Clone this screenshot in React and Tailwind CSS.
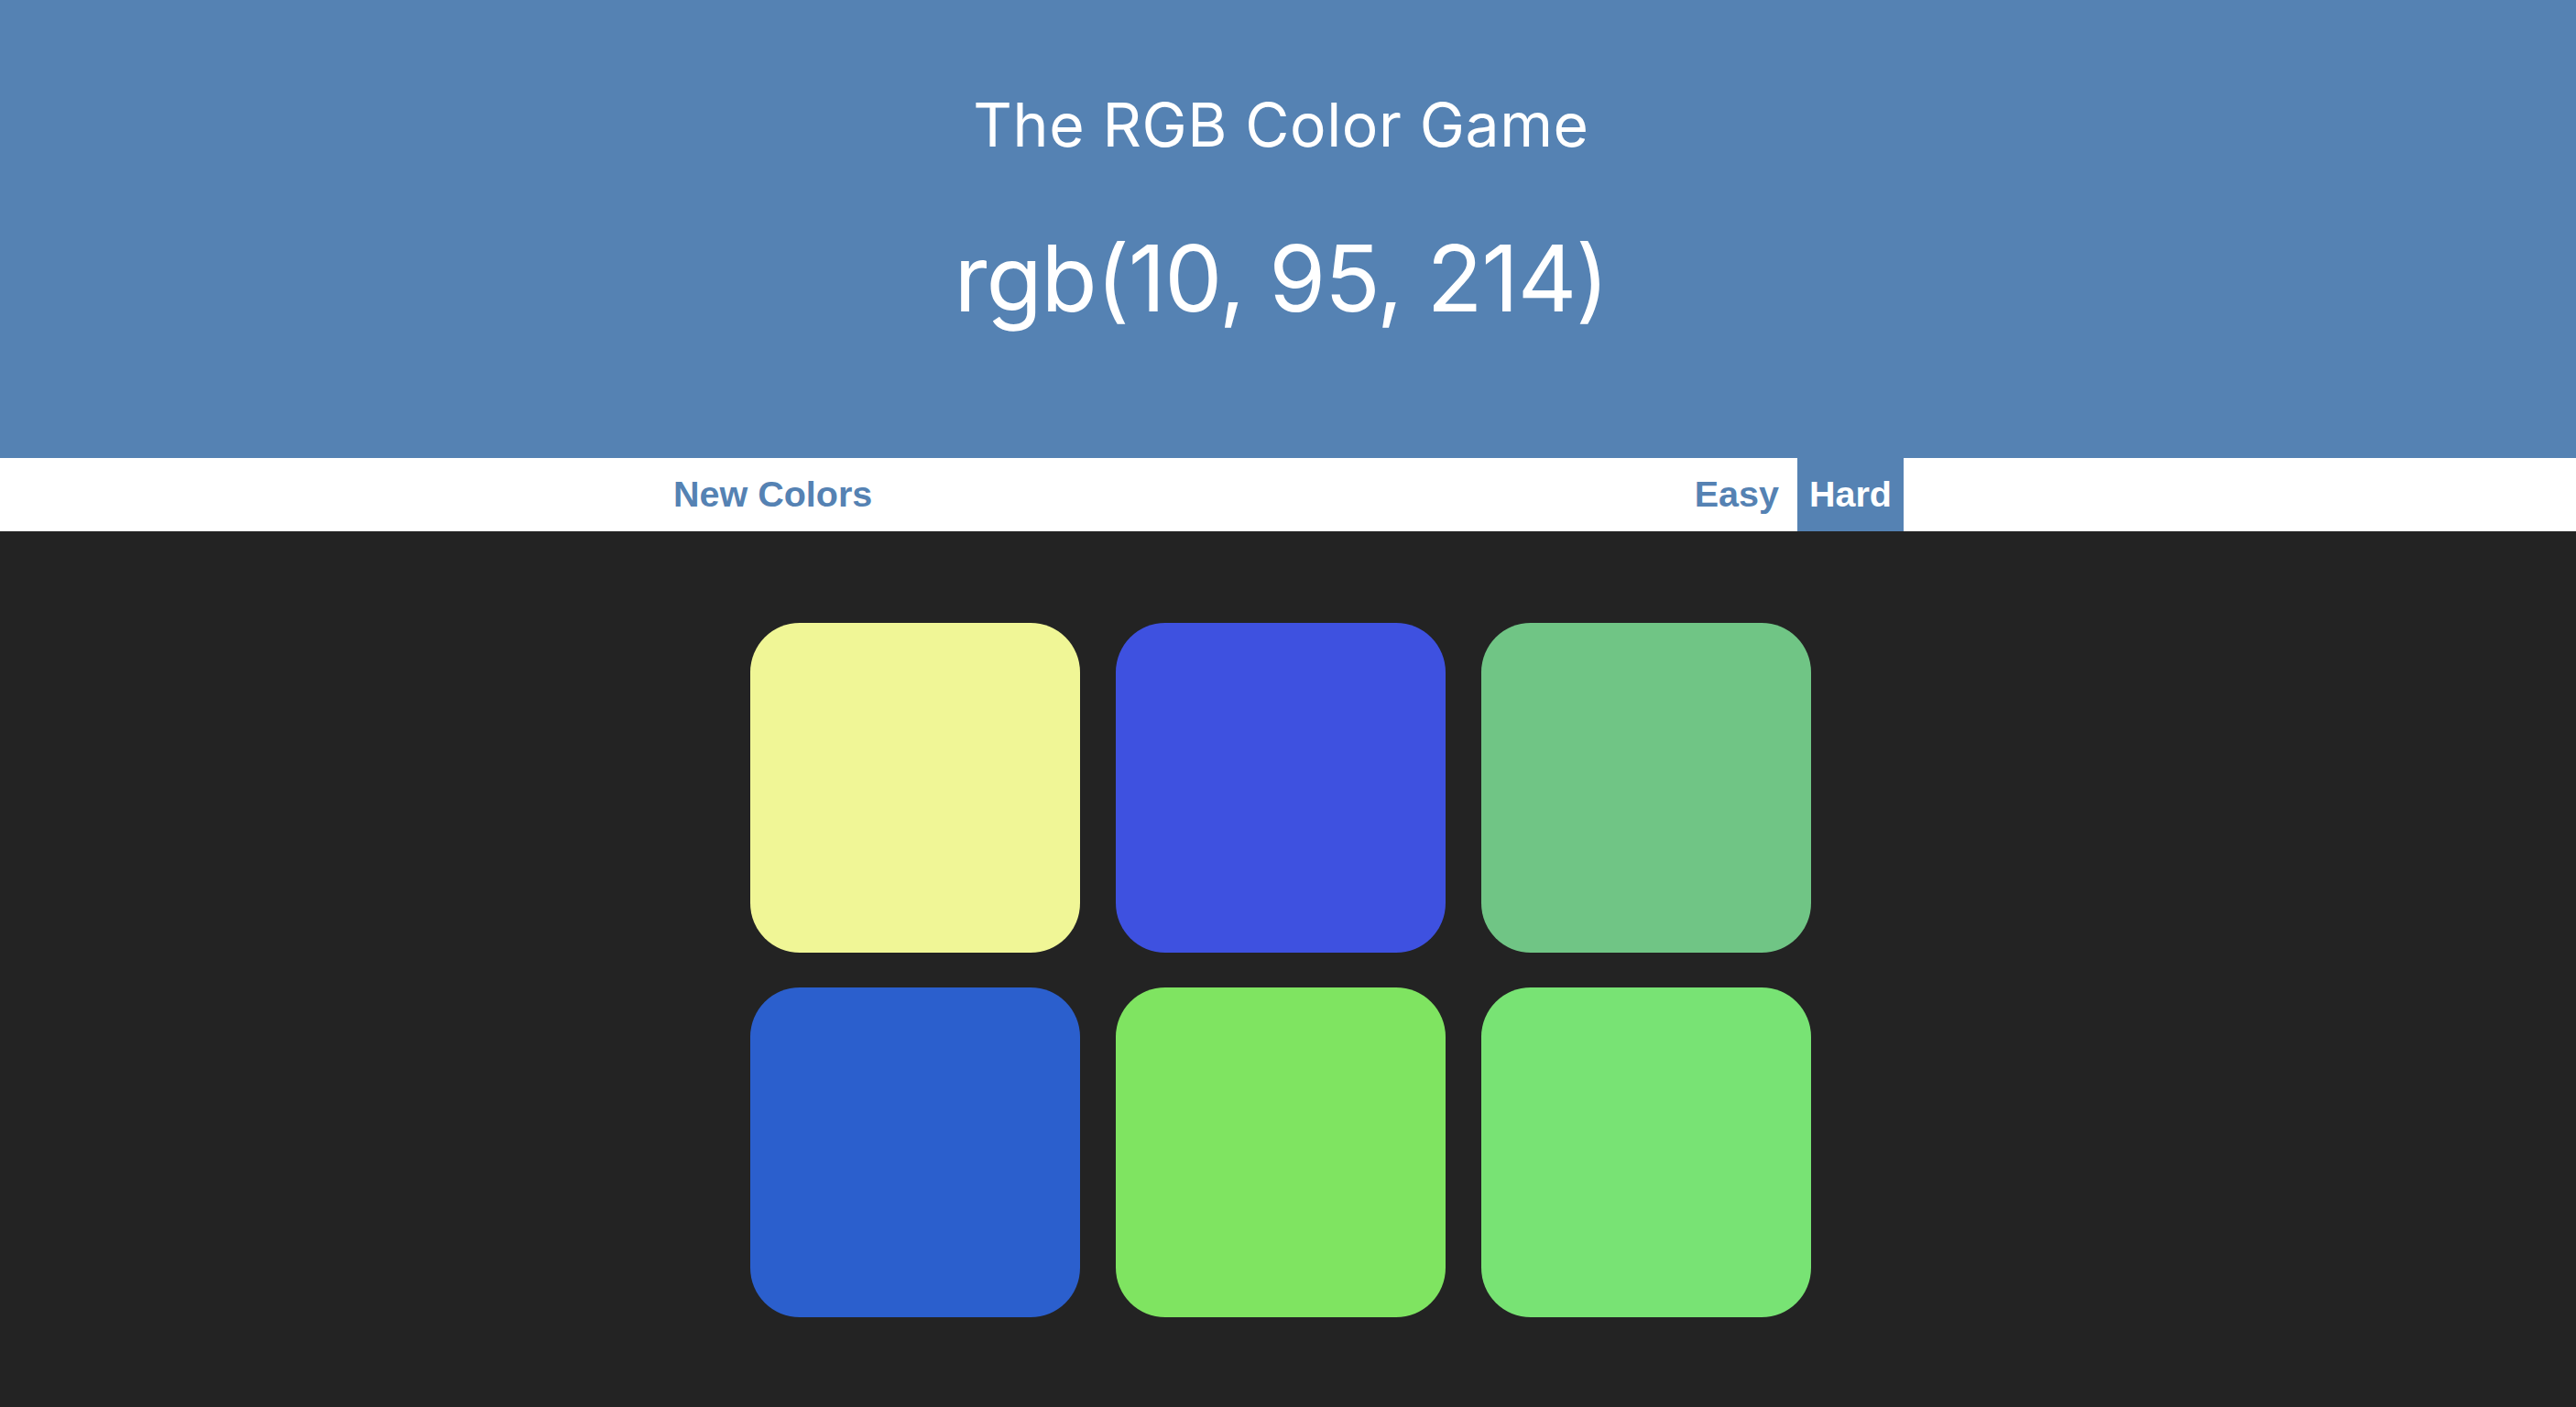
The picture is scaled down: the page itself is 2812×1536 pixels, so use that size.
import React, { useState } from "react";

/* ================= DATA ================= */
const squares = [
  "bg-[#f0f696]",
  "bg-[#3e51e0]",
  "bg-[#70c585]",
  "bg-[#2b5fcd]",
  "bg-[#7fe461]",
  "bg-[#78e374]",
];

const App = () => {
  const [mode, setMode] = useState("hard");

  return (
    <div className="min-h-[1536px] bg-[#232323] font-['Liberation_Sans',Arial,sans-serif]">
      {/* ================= HEADER ================= */}
      <header className="h-[500px] bg-[#5582b3] pr-[15px] pt-[103px] text-center text-white font-['Inter',sans-serif] font-normal">
        <h1 className="text-[66px] leading-[66px] tracking-[0.6px]">
          The RGB Color Game
        </h1>
        <div className="mt-[85px] text-[100px] leading-[100px] tracking-[-1.2px]">
          rgb(10, 95, 214)
        </div>
      </header>

      {/* ================= STRIPE ================= */}
      <nav className="flex h-[80px] items-stretch bg-white text-[39.5px] font-bold text-[#5582b3]">
        <button className="ml-[721px] px-[14px]">New Colors</button>
        <div className="flex-1" />
        <button
          onClick={() => setMode("easy")}
          className={
            mode === "easy"
              ? "bg-[#5582b3] px-[13px] text-white"
              : "px-[13px]"
          }
        >
          Easy
        </button>
        <button
          onClick={() => setMode("hard")}
          className={
            mode === "hard"
              ? "ml-[7px] mr-[734px] bg-[#5582b3] px-[13px] text-white"
              : "ml-[7px] mr-[734px] px-[13px]"
          }
        >
          Hard
        </button>
      </nav>

      {/* ================= SQUARES ================= */}
      <div className="ml-[819px] mt-[100px] grid w-[1158px] grid-cols-[360px_360px_360px] gap-x-[39px] gap-y-[38px]">
        {squares.map((color, i) => (
          <div key={i} className={`h-[360px] w-[360px] rounded-[54px] ${color}`} />
        ))}
      </div>
    </div>
  );
};

export default App;
